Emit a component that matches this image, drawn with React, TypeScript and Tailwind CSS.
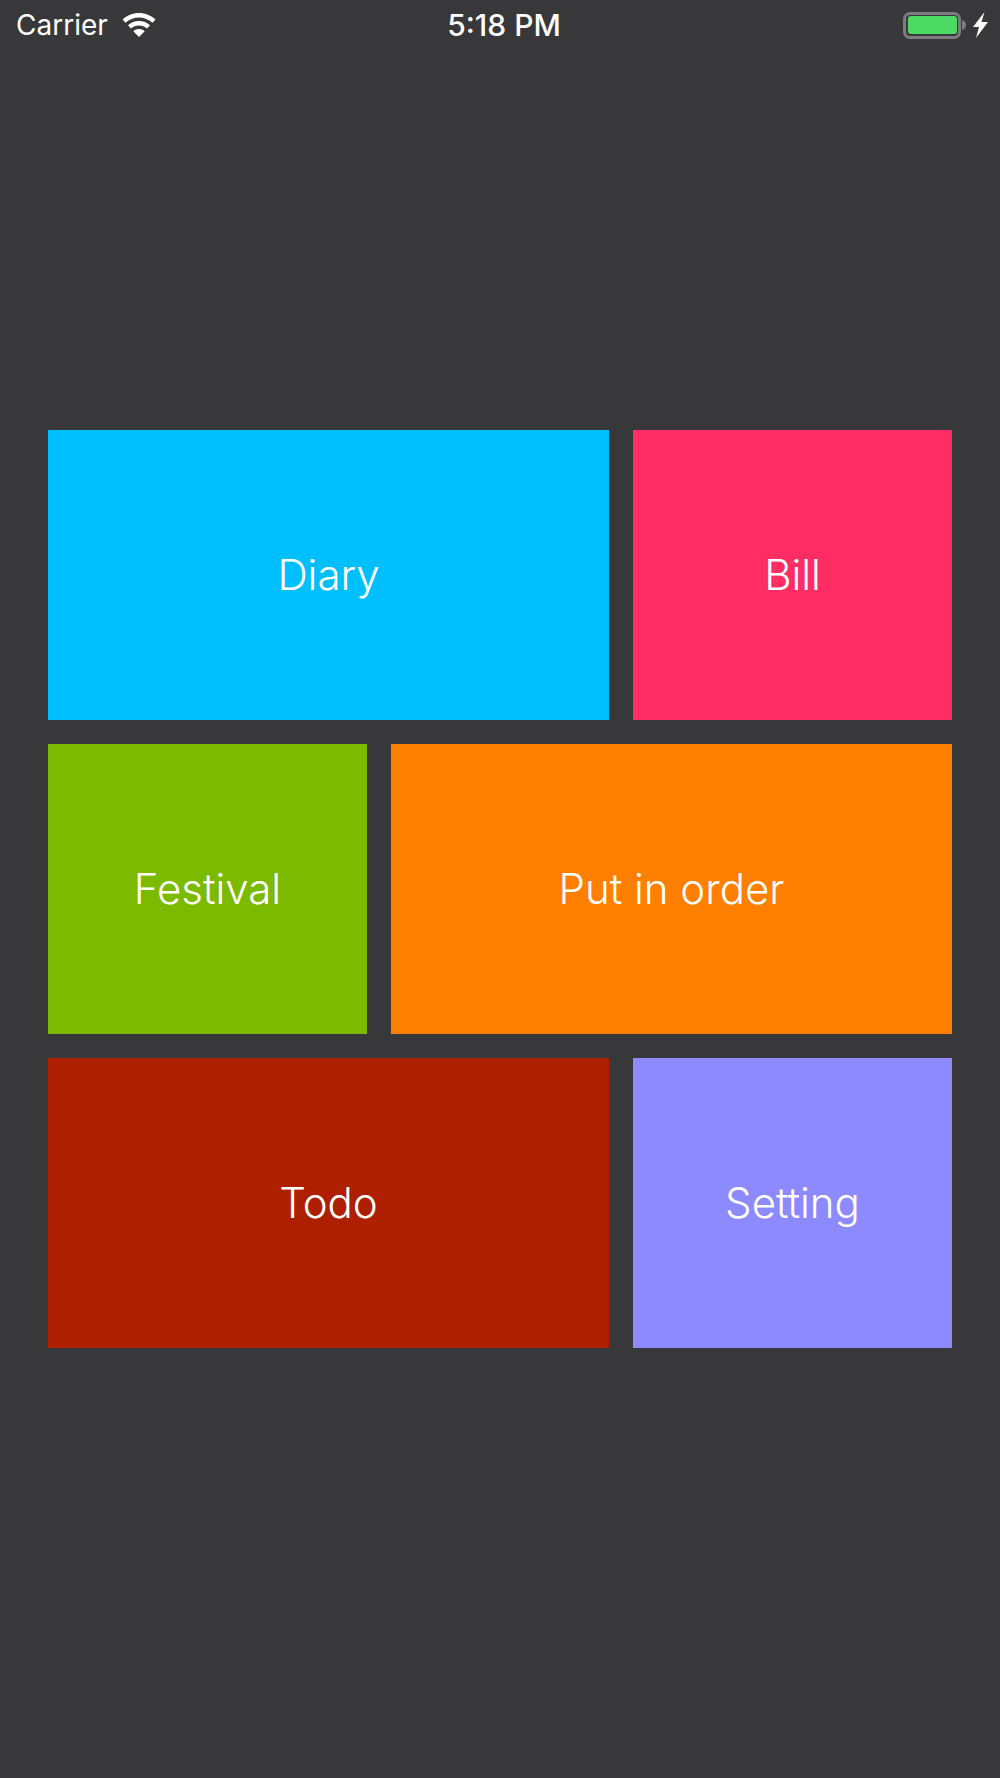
const font = { fontFamily: "Inter, 'Liberation Sans', sans-serif" };

function Wifi() {
  return (
    <svg width="34" height="24" viewBox="0 0 34 24" fill="#fff">
      <path d="M17 0C10.600 0 5 2.400 0.500 6.500L3.600 9.800C7.300 6.500 12 4.500 17 4.500s9.700 2 13.400 5.300l3.100-3.300C29 2.400 23.400 0 17 0z" />
      <path d="M17 8c-4.300 0-8.100 1.600-11 4.200l3 3.200C11.200 13.500 14 12.400 17 12.400s5.800 1.100 8 3l3-3.200C25.100 9.600 21.300 8 17 8z" />
      <path d="M17 16c-2.200 0-4.200 0.800-5.700 2.200L17 24l5.700-5.800C21.200 16.800 19.200 16 17 16z" />
    </svg>
  );
}

function Battery() {
  return (
    <div className="flex items-center gap-[1px]">
      <div className="w-[58px] h-[27px] rounded-[7px] border-[3px] border-[#7d7d7f] p-[1.500px]">
        <div className="w-full h-full rounded-[3px] bg-[#4cd964]" />
      </div>
      <svg width="4" height="10" viewBox="0 0 4 10" fill="#7d7d7f">
        <path d="M0 0c2.500 0.500 4 2.500 4 5S2.500 9.500 0 10z" />
      </svg>
    </div>
  );
}

function Bolt() {
  return (
    <svg width="15" height="26" viewBox="0 0 15 26" fill="#fff">
      <path d="M11.500 0L0 15h6L3 26 15 10H8.500z" />
    </svg>
  );
}

function Tile({ label, color }: { label: string; color: string }) {
  return (
    <div className={`h-[290px] pb-[2px] flex items-center justify-center text-white text-[42px] font-[350] ${color}`}>
      {label}
    </div>
  );
}

export default function App() {
  return (
    <div className="w-[1000px] h-[1778px] bg-[#38383a] flex flex-col" style={font}>
      <div className="relative h-[50px] flex items-center justify-between pl-[16px] pr-[12px] text-white">
        <div className="flex items-center gap-[14px]">
          <span className="text-[28px] leading-none">Carrier</span>
          <Wifi />
        </div>
        <span className="absolute left-[8px] right-0 text-center text-[30px] font-medium leading-none">5:18 PM</span>
        <div className="flex items-center gap-[7px]">
          <Battery />
          <Bolt />
        </div>
      </div>
      <div className="flex flex-col gap-[24px] px-[48px] pt-[380px]">
        <div className="grid grid-cols-[561px_319px] gap-[24px]">
          <Tile label="Diary" color="bg-[#00bfff]" />
          <Tile label="Bill" color="bg-[#ff2d64]" />
        </div>
        <div className="grid grid-cols-[319px_561px] gap-[24px]">
          <Tile label="Festival" color="bg-[#7cba00]" />
          <Tile label="Put in order" color="bg-[#ff8000]" />
        </div>
        <div className="grid grid-cols-[561px_319px] gap-[24px]">
          <Tile label="Todo" color="bg-[#ae1f00]" />
          <Tile label="Setting" color="bg-[#8d8aff]" />
        </div>
      </div>
    </div>
  );
}
